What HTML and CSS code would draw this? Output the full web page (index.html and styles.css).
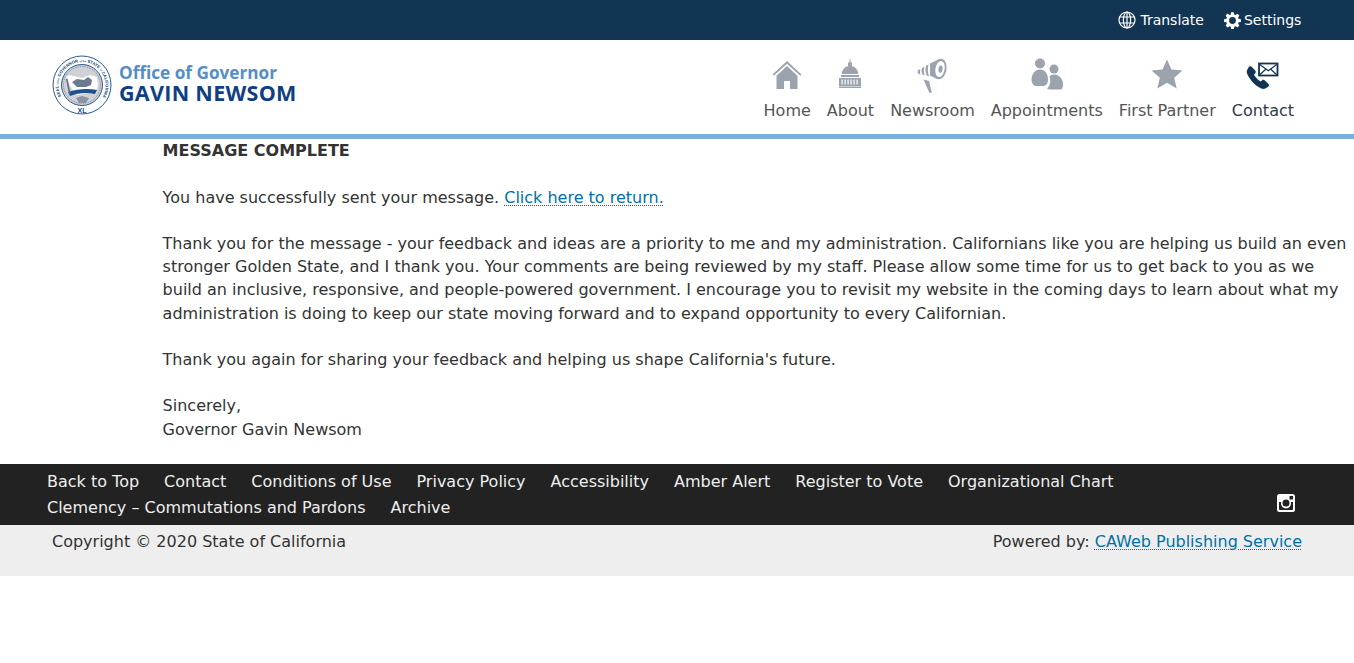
FILE: index.html
```html
<!DOCTYPE html>
<html lang="en">
<head>
<meta charset="utf-8">
<title>Message Complete</title>
<link rel="stylesheet" href="styles.css">
</head>
<body>
<div class="utility">
  <a class="util-link" href="#">
    <svg class="util-icon util-icon--globe" viewBox="0 0 18 18" fill="none" stroke="#fff" stroke-width="1.2"><circle cx="9" cy="9" r="8"/><ellipse cx="9" cy="9" rx="3.600" ry="8"/><path d="M9 1v16M1.400 6h15.200M1.400 12h15.200"/></svg>
    Translate</a>
  <a class="util-link" href="#">
    <svg class="util-icon util-icon--gear" viewBox="-1 -1 20 20"><path fill="#fff" fill-rule="evenodd" d="M7.400 -.8h3.200l.5 2.700 1.500.6 2.300-1.500 2.200 2.200-1.500 2.300.6 1.500 2.700.5v3.200l-2.700.5-.6 1.500 1.500 2.300-2.200 2.200-2.300-1.500-1.500.6-.5 2.700H7.400l-.5-2.700-1.500-.6-2.300 1.500-2.200-2.200 1.500-2.300-.6-1.500-2.700-.5V7.400l2.700-.5.6-1.500-1.500-2.300 2.200-2.200 2.300 1.500 1.500-.6zM9 5a4 4 0 1 0 0 8 4 4 0 0 0 0-8z"/></svg>
    Settings</a>
</div>

<header class="masthead">
  <a class="brand" href="#">
    <svg class="seal" viewBox="0 0 60 60">
      <defs><path id="sealArc" d="M9.200 41.500A23.500 23.500 0 1 1 50.800 41.500"/></defs>
      <circle cx="30" cy="30" r="29" fill="#fff" stroke="#2b5a92" stroke-width="1"/>
      <circle cx="30" cy="30" r="20.500" fill="#cfd1d6" stroke="#2b5a92" stroke-width="1"/>
      <circle cx="30" cy="30" r="18.500" fill="none" stroke="#5a6f8c" stroke-width=".8" stroke-dasharray=".8 1"/>
      <text class="seal-text" textLength="97"><textPath href="#sealArc">SEAL <tspan class="seal-small">of the</tspan> GOVERNOR <tspan class="seal-small">of the</tspan> STATE <tspan class="seal-small">of</tspan> CALIFORNIA</textPath></text>
      <path d="M14 22l3-2 13 3 8-3 7 2 1 8-2 7-20 3-6-9z" fill="#fff"/>
      <path d="M20 27l5-3 7 1 4-3 4 3-1 5-5 2H25z" fill="#6c7a8e"/>
      <path d="M16 37c9-3 20-4 29-2l-2 4c-9-2-17-1-25 2z" fill="#1f4f8d"/>
      <path d="M14 24l3 15 1.500-.5-3-15z" fill="#5f6d80"/>
      <path d="M24 43l6-2 7 2-3 5h-7z" fill="#8a94a3"/>
      <text class="seal-xl" x="30" y="57.500" text-anchor="middle">XL</text>
    </svg>
    <span class="brand-text">
      <span class="brand-office">Office of Governor</span>
      <span class="brand-name">GAVIN NEWSOM</span>
    </span>
  </a>
  <nav class="nav">
    <a class="nav-item" href="#">
      <svg class="nav-icon" viewBox="0 0 32 32" fill="#9aa3ae"><path d="M16 3L1.500 16.500l1.300 1.300L16 5.700l13.200 12.100 1.300-1.300z"/><path d="M16 8L5.500 17.700V31h7.500v-8h6v8h7.500V17.700z"/></svg>
      Home</a>
    <a class="nav-item" href="#">
      <svg class="nav-icon" viewBox="0 0 32 32" fill="#9aa3ae"><path d="M15.500 1h1v4h-1z"/><path d="M14 4.500h4V8h-4z"/><path d="M16 8c-4.800 0-8 3.500-8.300 8h16.600C24 11.500 20.800 8 16 8z"/><path d="M7 17h18v2H7z"/><path fill-rule="evenodd" d="M5 20h22v8H5zm2.500 1.500v5h1.200v-5zm3 0v5h1.200v-5zm3 0v5h1.200v-5zm3 0v5h1.200v-5zm3 0v5h1.200v-5zm3 0v5h1.200v-5z"/><path d="M5 28.500h22V30H5z"/></svg>
      About</a>
    <a class="nav-item" href="#">
      <svg class="nav-icon" viewBox="0 0 32 32" fill="#9aa3ae"><path d="M14 5.500L23.500 1 21 21l-7-3.500z"/><g transform="rotate(10 24 11)"><ellipse cx="24" cy="11" rx="6.500" ry="10.300"/><ellipse cx="24" cy="11" rx="4.600" ry="8.200" fill="#fff"/><ellipse cx="24.500" cy="11" rx="2" ry="3.600"/></g><path d="M10 7.800l2.600-1.200q-1.800 6 .4 11.800l-2.600-1.200q-2-4.700-.4-9.400z"/><path d="M6 10l2.400-1.200q-1.400 4.800.2 8.600L6.200 16.300q-1.500-3-.2-6.300z"/><path d="M2 12.300l2.400-1.300q-1 3.300 0 5.500L2 15.500q-.9-1.500 0-3.200z"/><path d="M7.500 21.500l5.500 1.500 2.800 11.500-2.300.5z"/></svg>
      Newsroom</a>
    <a class="nav-item" href="#">
      <svg class="nav-icon" viewBox="0 0 32 32" fill="#9aa3ae"><circle cx="9" cy="5.500" r="5"/><path d="M9 11.500c-5 0-8.500 4.500-8.500 10 0 3 1.500 5.500 3.500 6.500h9c3-1 4-3.500 4-6.500 0-5.500-3-10-8-10z"/><circle cx="23" cy="11" r="4.500"/><path d="M23 16.500c-2 0-3.500.8-4.500 2 .8 2 1 4.500.6 6.500-.4 2-1.400 4-3.100 5.500 1 .7 2 1 3 1h10c2 0 3-2 3-5 0-5.500-3.500-10-9-10z"/></svg>
      Appointments</a>
    <a class="nav-item" href="#">
      <svg class="nav-icon" viewBox="0 0 30 30" fill="#9aa3ae"><path d="M15 1.500l4.200 9.300 10.300.9-7.800 6.800 2.400 10-9.100-5.300-9.100 5.300 2.400-10L.5 11.700l10.300-.9z"/></svg>
      First Partner</a>
    <a class="nav-item nav-item--active" href="#">
      <svg class="nav-icon" viewBox="0 0 32 32"><path fill="#133554" transform="translate(-1 1) scale(1.15)" d="M1 9.500c-.5 1-.5 2.500.3 4 2.500 5 6.500 9.500 11.500 12 1.500.7 3 .8 4 .2l2.500-1.600c.8-.6.900-1.600.3-2.300l-3.200-3.200c-.6-.6-1.600-.7-2.300-.1l-1.400 1.100c-2.300-1.500-4.300-3.600-5.800-6l1.200-1.300c.6-.7.500-1.700-.1-2.300L4.700 6.600C4 6 3 6.100 2.500 6.800z"/><rect x="12" y="5.500" width="18.500" height="12" fill="#fff" stroke="#133554" stroke-width="1.800"/><path d="M12.500 6.300l8.800 6.500 8.700-6.500M12.500 17l6.500-6M30 17l-6.500-6" fill="none" stroke="#133554" stroke-width="1.200"/></svg>
      Contact</a>
  </nav>
</header>

<main class="content">
  <p class="block"><strong class="title">MESSAGE COMPLETE</strong></p>
  <p class="block">You have successfully sent your message. <a class="link" href="#">Click here to return.</a></p>
  <p class="block">Thank you for the message - your feedback and ideas are a priority to me and my administration. Californians like you are helping us build an even stronger Golden State, and I thank you. Your comments are being reviewed by my staff. Please allow some time for us to get back to you as we build an inclusive, responsive, and people-powered government. I encourage you to revisit my website in the coming days to learn about what my administration is doing to keep our state moving forward and to expand opportunity to every Californian.</p>
  <p class="block">Thank you again for sharing your feedback and helping us shape California's future.</p>
  <p class="block">Sincerely,<br>Governor Gavin Newsom</p>
</main>

<footer>
  <div class="footer-links">
    <ul class="link-list">
      <li><a href="#">Back to Top</a></li>
      <li><a href="#">Contact</a></li>
      <li><a href="#">Conditions of Use</a></li>
      <li><a href="#">Privacy Policy</a></li>
      <li><a href="#">Accessibility</a></li>
      <li><a href="#">Amber Alert</a></li>
      <li><a href="#">Register to Vote</a></li>
      <li><a href="#">Organizational Chart</a></li>
      <li><a href="#">Clemency – Commutations and Pardons</a></li>
      <li><a href="#">Archive</a></li>
    </ul>
    <a class="social" href="#" aria-label="Instagram">
      <svg class="social-icon" viewBox="0 0 18 18"><path fill="#fff" fill-rule="evenodd" d="M2.500 0h13A2.500 2.500 0 0 1 18 2.500v13a2.500 2.500 0 0 1-2.500 2.500h-13A2.500 2.500 0 0 1 0 15.500v-13A2.500 2.500 0 0 1 2.500 0zM12.500 2v3.500H16V2zM2 8v7c0 .6.400 1 1 1h12c.6 0 1-.4 1-1V8h-2.200a5 5 0 1 1-9.600 0zm7-2.500a3.500 3.500 0 1 0 0 7 3.500 3.500 0 0 0 0-7z"/></svg>
    </a>
  </div>
  <div class="copyright">
    <span>Copyright © 2020 State of California</span>
    <span>Powered by: <a class="link" href="#">CAWeb Publishing Service</a></span>
  </div>
</footer>
</body>
</html>
```
FILE: styles.css
```css
* { box-sizing: border-box; }
html, body { margin: 0; padding: 0; }
body {
  font-family: "DejaVu Sans", sans-serif;
  font-size: 16px;
  line-height: 23.2px;
  color: #333;
  background: #fff;
}
a { text-decoration: none; color: inherit; }

.utility {
  height: 40px;
  background: #133554;
  display: flex;
  justify-content: flex-end;
  align-items: center;
  gap: 20px;
  padding: 1px 52.600px 0 0;
}
.util-link {
  display: flex;
  align-items: center;
  gap: 4px;
  color: #fff;
  font-size: 14px;
}
.util-icon--globe { width: 18px; height: 18px; }
.util-icon--gear { width: 17px; height: 17px; margin-right: -1px; }

.masthead {
  height: 99px;
  border-bottom: 5px solid #7bafdb;
  display: flex;
  justify-content: space-between;
  padding: 0 60px 0 52px;
}
.brand { display: flex; align-items: center; gap: 7px; height: 90px; }
.seal { width: 60px; height: 60px; }
.seal-text { font: 700 4.200px "Liberation Sans", sans-serif; fill: #123f78; }
.seal-small { font-size: 2.400px; }
.seal-xl { font: 700 7px "Liberation Sans", sans-serif; fill: #1d4f86; }
.brand-text { display: flex; flex-direction: column; font-family: "Open Sans", sans-serif; margin-bottom: 4px; }
.brand-office { color: #558ec6; font-size: 17.200px; font-weight: 700; line-height: 20px; }
.brand-name { color: #0f3f83; font-size: 21.500px; font-weight: 700; line-height: 20px; letter-spacing: .3px; }

.nav { display: flex; gap: 16px; }
.nav-item {
  display: flex;
  flex-direction: column;
  align-items: center;
  justify-content: flex-end;
  height: 91px;
  color: #555;
  padding-bottom: 9px;
  line-height: 23px;
}
.nav-item--active { color: #2a3b4d; }
.nav-icon { width: 32px; height: 32px; margin-bottom: 9px; overflow: visible; }

.content { padding: .2px 0 0 162.600px; height: 325px; }
.block { margin: 0 0 23.200px; }
.title { color: #333; }
.link {
  color: #0070a8;
  text-decoration: underline dotted 1px;
  text-underline-offset: 2px;
}

.footer-links {
  background: #222;
  height: 61px;
  display: flex;
  padding: 5px 59px 0 47px;
  justify-content: space-between;
}
.link-list {
  list-style: none;
  margin: 0;
  padding: 0;
  display: flex;
  flex-wrap: wrap;
  align-content: flex-start;
  column-gap: 25px;
  width: 1150px;
  line-height: 26px;
  color: #eee;
}
.social { margin-top: 25px; height: 18px; }
.social-icon { display: block; width: 18px; height: 18px; }
.copyright {
  background: #eee;
  height: 51px;
  padding: 5px 52px;
  display: flex;
  justify-content: space-between;
}
```
